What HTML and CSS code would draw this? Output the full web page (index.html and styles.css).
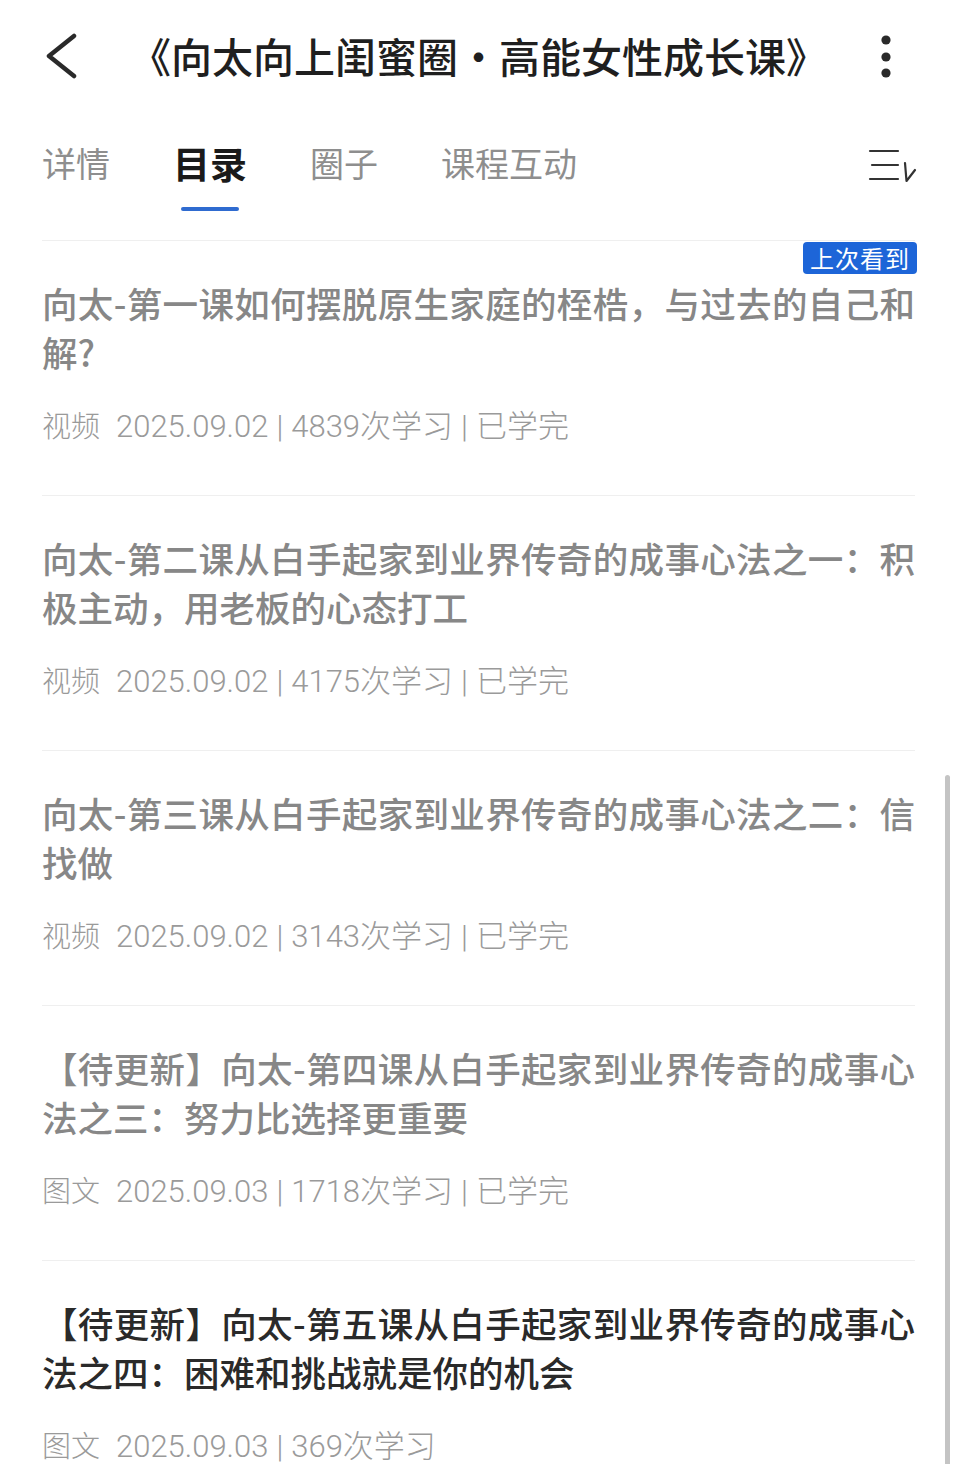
FILE: index.html
```html
<!DOCTYPE html>
<html lang="zh-CN">
<head>
<meta charset="utf-8">
<title>目录</title>
<link rel="stylesheet" href="styles.css">
</head>
<body>
<div class="page">
  <header class="nav">
    <svg class="nav-back" width="48" height="48" viewBox="0 0 48 48" aria-hidden="true">
      <path d="M32 5 L7 25 L32 45" fill="none" stroke="#2a2a2a" stroke-width="4.5" stroke-linecap="round" stroke-linejoin="round"/>
    </svg>
    <h1 class="nav-title">《向太向上闺蜜圈·高能女性成长课》</h1>
    <svg class="nav-more" width="48" height="48" viewBox="0 0 48 48" aria-hidden="true">
      <circle cx="19" cy="9" r="4.6" fill="#2a2a2a"/>
      <circle cx="19" cy="26" r="4.6" fill="#2a2a2a"/>
      <circle cx="19" cy="42" r="4.6" fill="#2a2a2a"/>
    </svg>
  </header>

  <nav class="tabs">
    <div class="tab">详情</div>
    <div class="tab active">目录<span class="tab-bar"></span></div>
    <div class="tab">圈子</div>
    <div class="tab">课程互动</div>
    <svg class="tabs-sort" width="52" height="50" viewBox="0 0 52 50" aria-hidden="true">
      <g fill="none" stroke="#333" stroke-width="2.2" stroke-linecap="round" stroke-linejoin="round">
        <path d="M4 13 H32"/>
        <path d="M6 27 H32"/>
        <path d="M4 41 H32"/>
        <path d="M39 25 L40.5 43 L49 32"/>
      </g>
    </svg>
  </nav>

  <main class="list">
    <article class="item">
      <span class="badge">上次看到</span>
      <h2 class="item-title">向太-第一课如何摆脱原生家庭的桎梏，与过去的自己和解?</h2>
      <p class="item-meta"><span class="meta-type">视频</span>2025.09.02<span class="sep">|</span>4839次学习<span class="sep">|</span>已学完</p>
    </article>
    <article class="item">
      <h2 class="item-title">向太-第二课从白手起家到业界传奇的成事心法之一：积极主动，用老板的心态打工</h2>
      <p class="item-meta"><span class="meta-type">视频</span>2025.09.02<span class="sep">|</span>4175次学习<span class="sep">|</span>已学完</p>
    </article>
    <article class="item">
      <h2 class="item-title">向太-第三课从白手起家到业界传奇的成事心法之二：信找做</h2>
      <p class="item-meta"><span class="meta-type">视频</span>2025.09.02<span class="sep">|</span>3143次学习<span class="sep">|</span>已学完</p>
    </article>
    <article class="item">
      <h2 class="item-title">【待更新】向太-第四课从白手起家到业界传奇的成事心法之三：努力比选择更重要</h2>
      <p class="item-meta"><span class="meta-type">图文</span>2025.09.03<span class="sep">|</span>1718次学习<span class="sep">|</span>已学完</p>
    </article>
    <article class="item current">
      <h2 class="item-title">【待更新】向太-第五课从白手起家到业界传奇的成事心法之四：困难和挑战就是你的机会</h2>
      <p class="item-meta"><span class="meta-type">图文</span>2025.09.03<span class="sep">|</span>369次学习</p>
    </article>
  </main>

  <div class="scrollbar"></div>
</div>
</body>
</html>
```

FILE: styles.css
```css
* {
  box-sizing: border-box;
  margin: 0;
  padding: 0;
}

html, body {
  background: #ffffff;
}

body {
  width: 960px;
  height: 1464px;
  overflow: hidden;
  font-family: "Noto Sans CJK SC", "Noto Sans", sans-serif;
}

.page {
  position: relative;
  width: 960px;
  height: 1464px;
  overflow: hidden;
}

/* ---------- header ---------- */
.nav {
  height: 110px;
  display: flex;
  align-items: center;
  padding: 0 45px 0 42px;
}

.nav-back,
.nav-more {
  flex: 0 0 48px;
  display: block;
}

.nav-title {
  flex: 1;
  text-align: center;
  font-size: 41px;
  line-height: 48px;
  font-weight: 500;
  color: #1f1f1f;
  white-space: nowrap;
}

/* ---------- tabs ---------- */
.tabs {
  display: flex;
  align-items: flex-start;
  gap: 63px;
  padding: 28px 42px 29px 42px;
}

.tab {
  display: flex;
  flex-direction: column;
  align-items: center;
  font-size: 34px;
  line-height: 50px;
  color: #8e8e8e;
  white-space: nowrap;
}

.tab.active {
  font-size: 37px;
  font-weight: 700;
  color: #1a1a1a;
}

.tab-bar {
  display: block;
  width: 58px;
  height: 4px;
  margin-top: 19px;
  border-radius: 2px;
  background: #2f6bd0;
}

.tabs-sort {
  margin-left: auto;
  display: block;
}

/* ---------- list ---------- */
.list {
  padding: 0 45px 0 42px;
}

.item {
  position: relative;
  border-top: 1px solid #efefef;
  padding: 37px 0 51px;
}

.item-title {
  font-size: 35.5px;
  line-height: 49px;
  font-weight: 500;
  color: #878787;
  text-align: justify;
}

.item.current .item-title {
  color: #2a2a2a;
}

.item-meta {
  height: 40px;
  margin-top: 28px;
  font-family: Roboto, "Noto Sans CJK SC", sans-serif;
  font-weight: 300;
  font-size: 31px;
  line-height: 40px;
  color: #9a9a9a;
  white-space: nowrap;
}

.meta-type {
  font-family: "Noto Sans CJK SC", sans-serif;
  font-size: 29px;
  margin-right: 16px;
}

.sep {
  margin: 0 8px;
}

.badge {
  position: absolute;
  top: 1px;
  right: -2px;
  height: 32px;
  padding: 0 7px;
  border-radius: 4px;
  background: #1d65d8;
  color: #ffffff;
  font-size: 24px;
  line-height: 32px;
  letter-spacing: 1px;
}

/* ---------- scrollbar overlay ---------- */
.scrollbar {
  position: absolute;
  left: 945px;
  top: 775px;
  width: 5px;
  height: 720px;
  border-radius: 3px;
  background: #c4c4c4;
}
```
